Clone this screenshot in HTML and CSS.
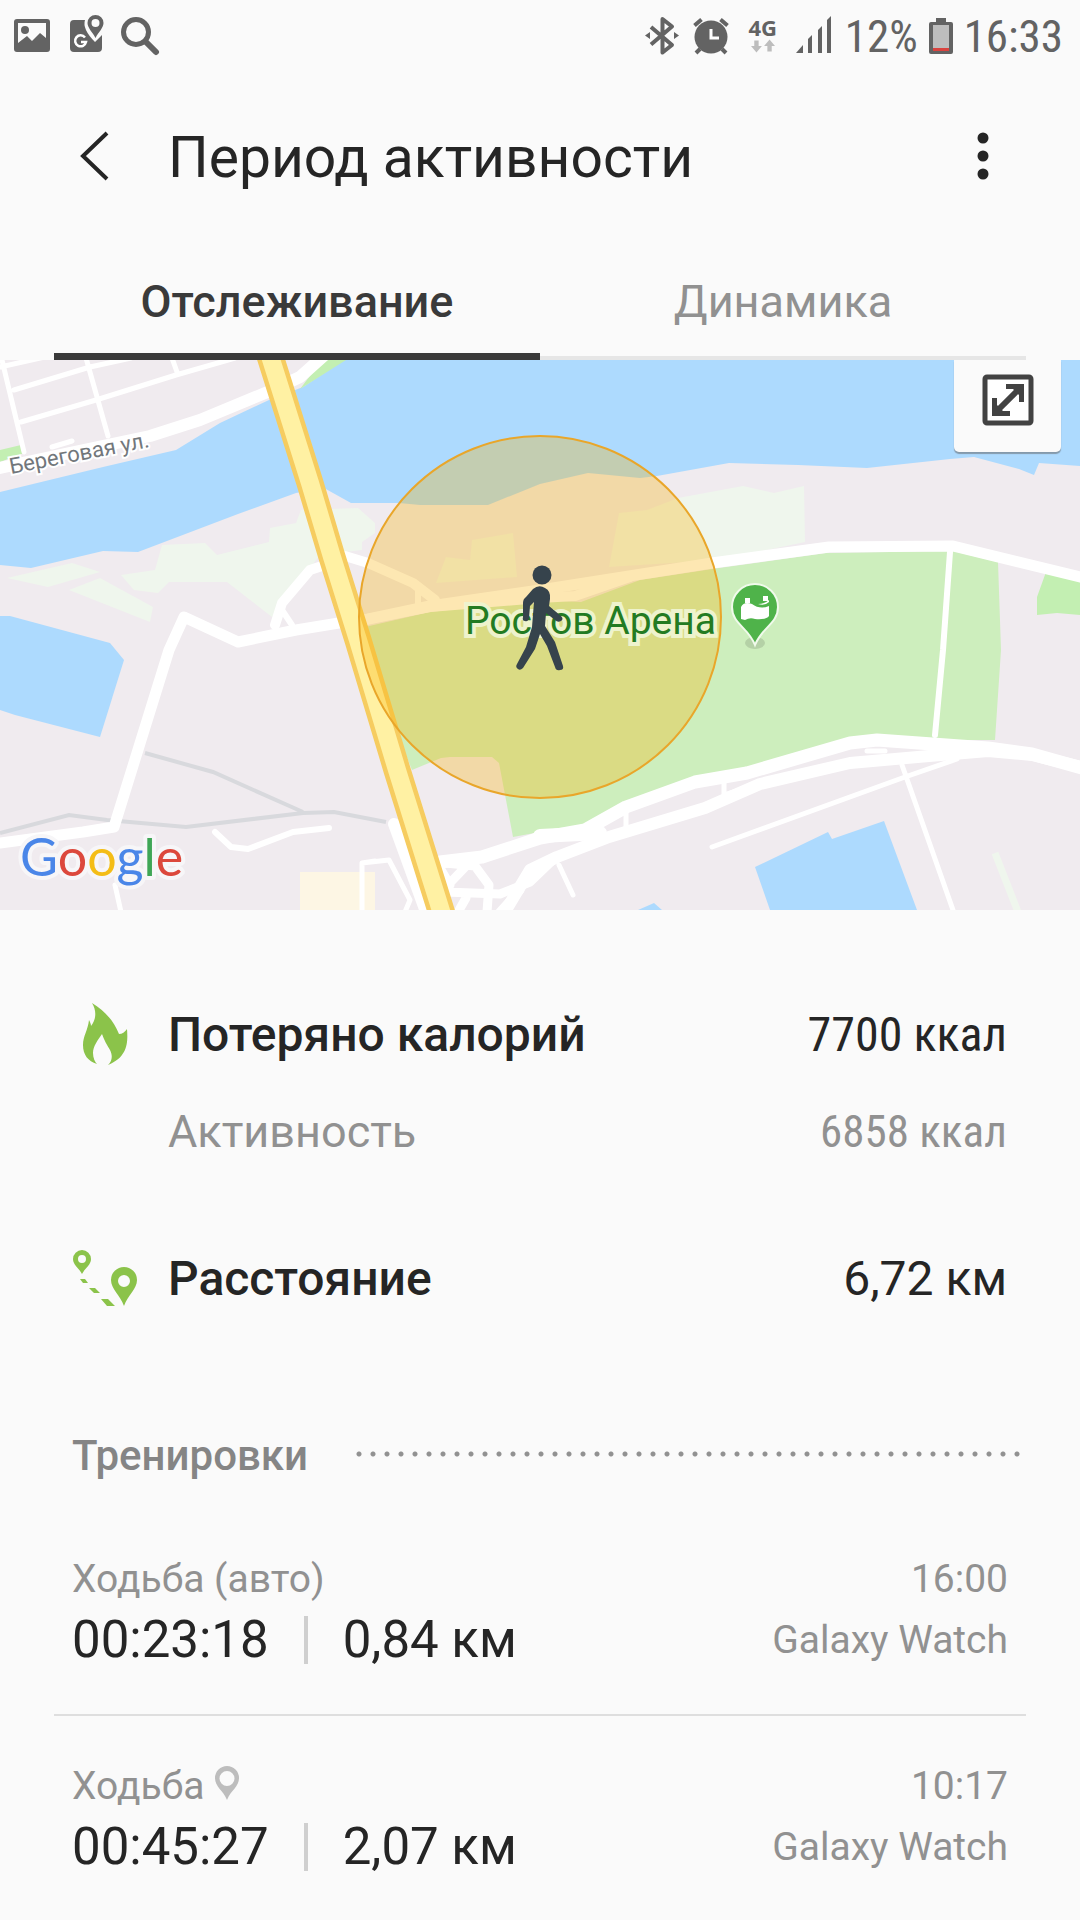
FILE: index.html
```html
<!DOCTYPE html>
<html lang="ru">
<head>
<meta charset="utf-8">
<meta name="viewport" content="width=device-width, initial-scale=1">
<title>Период активности</title>
<link rel="stylesheet" href="styles.css">
</head>
<body>
<div class="status">
  <div class="status-left">
    <svg width="40" height="72" viewBox="12 0 40 72" aria-hidden="true">
      <path fill="#636363" fill-rule="evenodd" d="M17 19h30a3 3 0 0 1 3 3v27a3 3 0 0 1-3 3H17a3 3 0 0 1-3-3V22a3 3 0 0 1 3-3zm1 4v20l9-7 5 5 8-8 6 5V23z"/>
      <circle cx="25" cy="30" r="4" fill="#636363"/>
    </svg>
    <svg width="40" height="72" viewBox="66 0 40 72" aria-hidden="true">
      <path fill="#636363" d="M74 20h11q-3 9 10 22l7-7v13a4 4 0 0 1-4 4H74a4 4 0 0 1-4-4V24a4 4 0 0 1 4-4z"/>
      <path fill="#636363" fill-rule="evenodd" d="M95.500 15a8 8 0 0 1 8 8c0 5-5 9-8 15-3-6-8-10-8-15a8 8 0 0 1 8-8zm0 4a4 4 0 1 0 0 8 4 4 0 0 0 0-8z"/>
      <path fill="none" stroke="#fff" stroke-width="2.500" d="M85 37.500a5.500 5.500 0 1 0 1 4.500h-5"/>
    </svg>
    <svg width="40" height="72" viewBox="120 0 40 72" aria-hidden="true">
      <circle cx="136" cy="32" r="12.500" fill="none" stroke="#636363" stroke-width="5"/>
      <path stroke="#636363" stroke-width="6" stroke-linecap="round" d="M146 42l10 10"/>
    </svg>
  </div>
  <div class="status-right">
    <svg width="38" height="72" viewBox="646 0 38 72" aria-hidden="true">
      <path fill="none" stroke="#636363" stroke-width="4" stroke-linejoin="round" d="M654 27l21 18-9.500 7.500V19l9.500 7.500-21 18"/>
      <path fill="#636363" d="M653 32l-5 3.500 5 3.500zM677 32l5 3.500-5 3.500z"/>
    </svg>
    <svg width="38" height="72" viewBox="692 0 38 72" aria-hidden="true">
      <circle cx="711" cy="37" r="16.500" fill="#636363"/>
      <path fill="none" stroke="#636363" stroke-width="4" d="M694.500 25.500l7-6M727.500 25.500l-7-6M700 49l-4 4M722 49l4 4"/>
      <path fill="none" stroke="#fff" stroke-width="3" d="M711 29v9h8"/>
    </svg>
    <div class="net">
      <span>4G</span>
      <svg width="24" height="14" viewBox="0 0 22 12" aria-hidden="true">
        <path fill="#bdbdbd" d="M3 1h4v5h3l-5 6-5-6h3zM15 11h4V6h3l-5-6-5 6h3z"/>
      </svg>
    </div>
    <svg width="38" height="72" viewBox="795 0 38 72" aria-hidden="true">
      <path fill="#636363" d="M795 53l7-8v8zM807 39l4-4v18h-4zM817 30l4-4v27h-4zM826 20l4-4v37h-4z"/>
    </svg>
    <span class="status-text">12%</span>
    <svg width="24" height="72" viewBox="928 0 24 72" aria-hidden="true">
      <path fill="#636363" d="M935 18h10v4h5a2 2 0 0 1 2 2v28a2 2 0 0 1-2 2h-20a2 2 0 0 1-2-2V24a2 2 0 0 1 2-2h5z"/>
      <path fill="#bdbdbd" d="M932 25h16v23h-16z"/>
      <path fill="#d9433f" d="M932 48h16v3h-16z"/>
    </svg>
    <span class="status-text">16:33</span>
  </div>
</div>

<header class="appbar">
  <button class="icon-btn back" aria-label="Назад">
    <svg width="30" height="52" viewBox="0 0 30 52" aria-hidden="true"><path fill="none" stroke="#252525" stroke-width="4" d="M27 3L3 26l24 23"/></svg>
  </button>
  <h1>Период активности</h1>
  <button class="icon-btn" aria-label="Ещё">
    <svg width="14" height="52" viewBox="0 0 14 52" aria-hidden="true"><g fill="#252525"><circle cx="7" cy="8" r="5.500"/><circle cx="7" cy="26" r="5.500"/><circle cx="7" cy="44" r="5.500"/></g></svg>
  </button>
</header>

<nav class="tabs">
  <a class="tab active" href="#track" aria-current="page">Отслеживание</a>
  <a class="tab" href="#trend">Динамика</a>
</nav>

<main>
<section class="map">
  <svg class="map-canvas" viewBox="0 360 1080 550" preserveAspectRatio="xMidYMid slice" role="img" aria-label="Карта">
    <path fill="#f0ebef" d="M0 360h1080v550H0z"/>
    <g fill="#addafe">
      <path d="M0 492L103 467 176 450 220 423 269 400 303 387 344 360H1080V466L1039 463 1034 475 1019 469 974 457 950 459 867 468 798 465 729 463 657 476 640 478 588 473 540 484 488 505 420 505 399 503H351L324 488 296 493 238 514 138 552 103 551 31 568 0 565z"/>
      <path d="M0 616H10L110 643 124 660 100 737 15 715 0 710z"/>
      <path d="M755 867L828 832 832 839 884 821 917 910H770zM638 910L654 903 662 910z"/>
    </g>
    <g fill="#eff6ed">
      <path d="M7 578L72 563 100 572 48 587zM69 590L100 578 153 607 150 622z"/>
      <path d="M121 575L155 570 162 545 205 543 217 555 269 542 270 528 296 523 301 510 358 508 375 523V533L362 542V550L320 555 272 617 227 582H169L158 593 134 590z"/>
      <path d="M619 513L647 510 678 498 743 486 774 493 804 486 805 542 719 560 609 567 614 540zM436 583L446 557 470 560 472 540 513 533 517 577z"/>
    </g>
    <path fill="#cdeebd" d="M365 627L430 612 540 600 581 602 640 580 719 568 826 553 953 551 998 562 1001 650 995 740H884L747 773 688 784 592 826 540 832 513 837 506 800 499 763 492 757H450L441 758 412 770 400 740 365 640z"/>
    <path fill="#c3efb2" d="M1046 572L1080 578V615L1057 613 1037 615V597zM0 450L21 445 24 453 0 462zM300 389L322 360H346z"/>
    <path fill="#fdf6e4" d="M300 872H375V910H300z"/>
    <g fill="none" stroke="#d8d9dd" stroke-width="4">
      <path d="M0 833L69 815 107 820 186 827 303 813 334 812 386 822M145 753L213 772 303 812"/>
    </g>
    <g fill="none" stroke="#fff" stroke-linejoin="round" stroke-linecap="round">
      <path stroke-width="12" d="M0 468L60 455 150 436 200 420 270 391 300 377 328 352"/>
      <path stroke-width="5" d="M0 367L45 357M14 390L90 367 131 358M21 422L96 400 176 375 235 358M2 360L24 452M86 358L108 436M172 358L177 372M52 447L72 441"/>
      <path stroke-width="11" d="M345 624L430 606 540 590 712 563 829 547 953 546 1080 577M345 622L296 630 238 642 184 617 169 650 114 827 83 832 0 843"/>
      <path stroke-width="10" d="M362 620L430 607 540 598 575 596 630 577M275 625L282 603 310 570 325 565M345 556L368 563 413 583 435 600"/>
      <path stroke-width="6" d="M418 587V605M282 610L292 625M950 552L943 650 935 735M215 832L231 847 248 849 293 832 329 828"/>
      <path stroke-width="13" d="M1085 769L1032 754 988 748 877 740 850 743 747 773 695 782 626 807 585 830 540 838 482 857 440 862"/>
      <path stroke-width="12" d="M1085 768L1032 755 988 751 929 756 850 763 760 784 705 808 609 837 557 857 530 870 506 910"/>
      <path stroke-width="14" d="M540 836L600 833"/>
      <path stroke-width="5" d="M712 847L905 777 957 759M902 765L953 910M559 865L573 895M115 885L121 912M362 912V863L389 860 410 900 405 912M362 863L375 861M626 810V828M724 783V795L745 788M867 751H885"/>
      <path stroke-width="12" d="M394 824L426 912"/>
      <path stroke-width="9" d="M436 862L475 866 489 885 487 912M445 892L500 894 530 882 555 858M448 885L470 862M440 868L450 885M466 898L458 912M520 890L500 912"/>
    </g>
    <path stroke="#eff6ed" stroke-width="7" d="M995 853L1018 912"/>
    <g fill="none">
      <path stroke="#f6cc60" stroke-width="27" d="M270 356L310 483 332 557 358 640 397 770 442 914"/>
      <path stroke="#fff1a3" stroke-width="18" d="M270 356L310 483 332 557 358 640 397 770 442 914"/>
    </g>
    <circle cx="540" cy="617" r="181" fill="#faaf00" fill-opacity=".3" stroke="#e9a62a" stroke-width="2"/>
    <text class="street" transform="rotate(-11 11 474)" x="11" y="474">Береговая ул.</text>
    <text class="place" x="465" y="634">Ростов Арена</text>
    <ellipse cx="755" cy="643" rx="10" ry="6" fill="#000" opacity=".12"/>
    <path fill="#4fb34a" stroke="#f0faeb" stroke-width="2" d="M755 584a23 23 0 0 1 23 23c0 17-16 20-23 38-7-18-23-21-23-38a23 23 0 0 1 23-23z"/>
    <path fill="#fff" d="M741 607q3-6 11-3 8 6 17 2v10q-3 4-14 3-5-2-10 1l-4-1zM745 598h5v5h-5zM763 596h5v5h-5zM758 604q7 0 11-4v2q-4 4-11 2z"/>
    <g fill="#36434c">
      <circle cx="542" cy="575" r="9.500"/>
      <path d="M533 589q6-5 12-1 6 3 5 11l-1 7 12 10q3 3 0 5t-6-1l-9-7-1 13 10 16 8 24q1 4-3 4-4 1-5-3l-8-21-7-12-5 15-12 19q-3 3-5 1-3-2-1-5l9-17 6-20 2-25V602l-4 4-1 12q-1 4-4 3-3 0-2-4v-14q0-4 3-6z"/>
    </g>
    <text class="brand" x="20" y="876"><tspan fill="#4a86e8">G</tspan><tspan fill="#dc483c">o</tspan><tspan fill="#f4bd16">o</tspan><tspan fill="#4a86e8">g</tspan><tspan fill="#3fa656">l</tspan><tspan fill="#dc483c">e</tspan></text>
  </svg>
  <button class="expand" aria-label="Развернуть карту">
    <svg width="52" height="52" viewBox="0 0 52 52" aria-hidden="true">
      <rect x="3" y="3" width="46" height="46" rx="2" fill="#fff" stroke="#424242" stroke-width="5"/>
      <path fill="none" stroke="#424242" stroke-width="6" d="M16 36L36 16"/>
      <path fill="#424242" d="M24 10h18v18h-5V15H24zM10 24h5v13h13v5H10zM31 15h6v6zM15 31v6h6z"/>
    </svg>
  </button>
</section>

<section class="stats">
  <div class="stat">
    <svg width="66" height="72" viewBox="72 997 66 72" aria-hidden="true">
      <path fill="#8bc34a" d="M92 1002c12 7 22 18 27 31 3 0 6-2 8-5 1 13 1 28-19 36 4-4 5-9 2-15-3-5-6-10-8-16-4 6-9 12-9 19 0 5 2 9 4 11-9-3-14-9-14-19 0-9 5-15 6-25 1 2 2 4 2 6 5-6 6-15 1-23z"/>
    </svg>
    <span class="stat-name">Потеряно калорий</span>
    <span class="stat-value narrow">7700 ккал</span>
  </div>
  <div class="stat sub">
    <span class="stat-name">Активность</span>
    <span class="stat-value narrow">6858 ккал</span>
  </div>
  <div class="stat distance">
    <svg width="66" height="72" viewBox="72 1241 66 72" aria-hidden="true">
      <g fill="#8bc34a" fill-rule="evenodd">
        <path d="M82 1249a9 9 0 0 1 9 9c0 6-6 9-9 15-3-6-9-9-9-15a9 9 0 0 1 9-9zm0 5a4 4 0 1 0 0 8 4 4 0 0 0 0-8z"/>
        <path d="M124 1266a13 13 0 0 1 13 13c0 9-9 15-13 26-4-11-13-17-13-26a13 13 0 0 1 13-13zm0 8a6 6 0 1 0 0 12 6 6 0 0 0 0-12z"/>
        <path d="M80 1278h5l3 4h-5zM89 1287h6l5 5h-6zM101 1298h7l7 7h-8z"/>
      </g>
    </svg>
    <span class="stat-name">Расстояние</span>
    <span class="stat-value">6,72 км</span>
  </div>
</section>

<section class="workouts">
  <div class="section-head">
    <h2>Тренировки</h2>
    <div class="dots"></div>
  </div>
  <ul>
    <li>
      <div class="row"><span>Ходьба (авто)</span><time>16:00</time></div>
      <div class="row"><span class="metrics"><b>00:23:18</b><i></i><b>0,84 км</b></span><span class="device">Galaxy Watch</span></div>
    </li>
    <li>
      <div class="row">
        <span class="kind">Ходьба
          <svg width="26" height="40" viewBox="0 0 26 40" aria-hidden="true"><path fill="#bdbdbd" fill-rule="evenodd" d="M13 0a12 12 0 0 1 12 12c0 9-8 12-12 22C9 24 1 21 1 12A12 12 0 0 1 13 0zm0 5a7 7 0 1 0 0 15 7 7 0 0 0 0-15z"/></svg>
        </span>
        <time>10:17</time>
      </div>
      <div class="row"><span class="metrics"><b>00:45:27</b><i></i><b>2,07 км</b></span><span class="device">Galaxy Watch</span></div>
    </li>
  </ul>
</section>
</main>
</body>
</html>
```
FILE: styles.css
```css
* { box-sizing: border-box; }

body {
  margin: 0;
  background: #fafafa;
  color: #252525;
  font-family: Roboto, "Noto Sans", sans-serif;
}

h1, h2, ul { margin: 0; padding: 0; }
ul { list-style: none; }
svg { display: block; }
b { font-weight: 400; }
button { border: 0; padding: 0; cursor: pointer; }

/* status bar */
.status {
  display: flex;
  justify-content: space-between;
  height: 72px;
  padding: 0 17px 0 12px;
  color: #636363;
}
.status-left { display: flex; gap: 14px; }
.status-right { display: flex; align-items: center; gap: 11px; }
.net {
  display: flex;
  flex-direction: column;
  align-items: center;
  width: 44px;
  padding-bottom: 4px;
  font: 700 22px/24px "Open Sans", sans-serif;
}
.status-text { padding-top: 2px; font-family: "Roboto Condensed", Roboto, sans-serif; font-size: 45px; line-height: 70px; }

/* title bar */
.appbar {
  display: flex;
  align-items: center;
  height: 168px;
  padding: 0 90px 0 80px;
}
.appbar h1 { flex: 1; padding-top: 4px; font-size: 57px; font-weight: 400; line-height: 68px; }
.icon-btn { background: none; }
.back { width: 88px; }

/* tabs */
.tabs {
  display: grid;
  grid-template-columns: 1fr 1fr;
  height: 120px;
  padding: 0 54px;
}
.tab {
  padding-top: 12px;
  border-bottom: 4px solid #e6e6e6;
  color: #919191;
  font-size: 45px;
  line-height: 100px;
  text-align: center;
  text-decoration: none;
}
.tab.active { border-bottom: 7px solid #3a3a3a; color: #3a3a3a; font-weight: 500; }

/* map */
.map { position: relative; }
.map-canvas { width: 100%; height: 550px; }
.street { font-size: 22px; fill: #72777b; stroke: #fff; stroke-width: 4px; paint-order: stroke; }
.place { font-size: 39px; fill: #237b22; stroke: #eef3cd; stroke-width: 8px; paint-order: stroke; }
.brand { font-family: Lato, sans-serif; font-size: 52px; font-weight: 400; stroke: #f7f6f8; stroke-width: 8px; stroke-linejoin: round; paint-order: stroke; }
.expand {
  position: absolute;
  top: 0;
  right: 19px;
  display: flex;
  justify-content: center;
  width: 107px;
  height: 92px;
  padding-top: 14px;
  border-radius: 0 0 5px 5px;
  background: #fafafa;
  box-shadow: 0 2px 1px #8499ab;
}

/* totals */
.stats { padding: 85px 73px 0 72px; }
.stat { display: flex; align-items: center; height: 78px; font-size: 48px; }
.stat svg { margin-right: -66px; }
.stat-name { flex: 1; padding-left: 96px; font-weight: 500; }
.narrow { font-family: "Roboto Condensed", Roboto, sans-serif; }
.sub { height: 116px; color: #919191; font-size: 45px; }
.sub .stat-name { font-weight: 400; }
.distance { margin-top: 50px; }

/* workouts */
.workouts { padding: 85px 54px 0; }
.section-head { display: flex; align-items: center; gap: 46px; height: 107px; padding: 0 4px 0 18px; }
.section-head h2 { color: #858585; font-size: 42px; font-weight: 500; }
.dots {
  flex: 1;
  height: 10px;
  background: radial-gradient(circle at 5px 3px, #919191 2px, transparent 3px) 0 0 / 14px 10px repeat-x;
}
li {
  padding: 46px 18px 44px;
  border-bottom: 2px solid #dedede;
  color: #919191;
  font-size: 39px;
  line-height: 48px;
}
li:last-child { border: 0; }
.row { display: flex; justify-content: space-between; }
.row + .row { align-items: center; margin-top: 7px; height: 60px; }
.kind { display: flex; align-items: center; gap: 10px; }
.metrics { display: flex; align-items: center; gap: 35px; color: #252525; font-size: 51px; line-height: 60px; }
.metrics i { width: 4px; height: 48px; background: #cfcfcf; }
```
